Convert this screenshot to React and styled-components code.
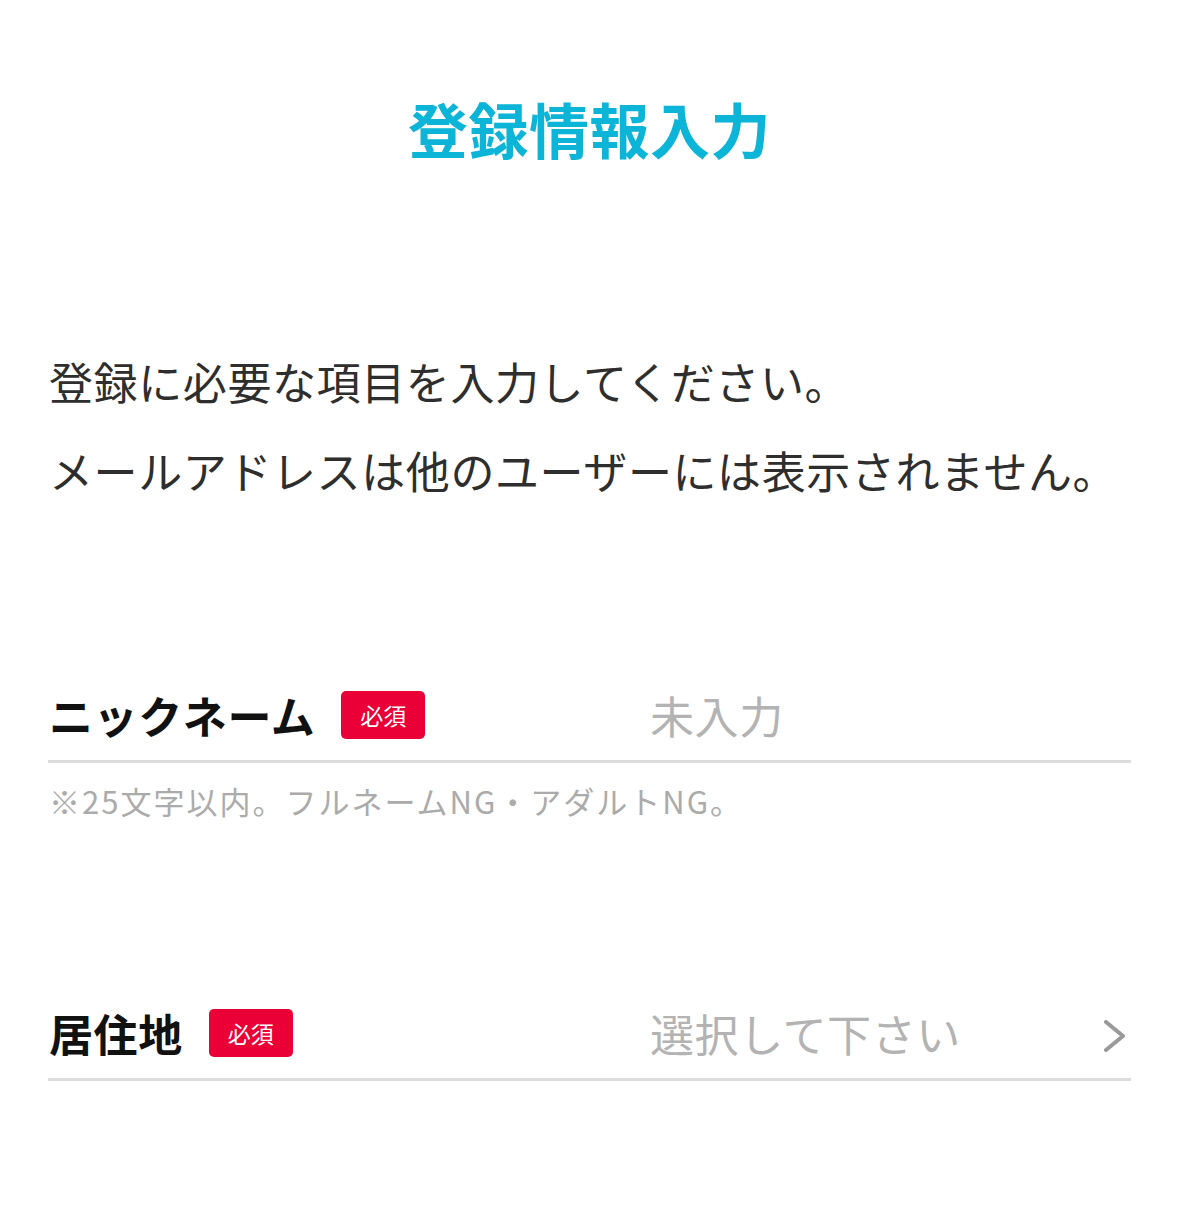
import React from "react";
import styled, { createGlobalStyle } from "styled-components";

const GlobalStyle = createGlobalStyle`
  html, body {
    margin: 0;
    padding: 0;
    background: #fff;
  }
  body {
    font-family: "Noto Sans CJK JP", "Noto Sans", sans-serif;
  }
`;

const Page = styled.div`
  width: 1179px;
  min-height: 1228px;
  box-sizing: border-box;
  padding: 98px 48px 0;
  background: #fff;
`;

const Title = styled.h1`
  margin: 0;
  font-size: 60px;
  line-height: 60px;
  font-weight: 700;
  letter-spacing: 0.5px;
  color: #0cb5d7;
  text-align: center;
`;

const Intro = styled.div`
  margin-top: 179px;
  padding-left: 1px;
  font-size: 44px;
  line-height: 89px;
  letter-spacing: 0.6px;
  color: #2e2e2e;
`;

const Field = styled.div`
  margin-top: ${(p) => p.$gap}px;
`;

// one form row: label + badge, then the value column, then optional chevron
const Row = styled.div`
  display: flex;
  align-items: center;
  height: 60px;
  padding-bottom: 15px;
  border-bottom: 3px solid #dcdcdc;
`;

const LabelArea = styled.div`
  display: flex;
  align-items: center;
  width: 602px;
  flex-shrink: 0;
  padding-left: 1px;
  box-sizing: border-box;
`;

const Label = styled.span`
  font-size: 44px;
  font-weight: 700;
  color: #111;
  line-height: 1;
  letter-spacing: 0.6px;
`;

const Badge = styled.span`
  display: inline-flex;
  align-items: center;
  justify-content: center;
  margin-left: 26px;
  width: 84px;
  height: 48px;
  border-radius: 5px;
  background: #ea0036;
  color: #fff;
  font-size: 23px;
  line-height: 1;
`;

const Value = styled.span`
  flex: 1;
  font-size: 44px;
  color: #b3b3b3;
  line-height: 1;
  letter-spacing: 0.6px;
`;

const Chevron = styled.svg`
  width: 22px;
  height: 32px;
  margin-right: 5px;
  margin-top: 6px;
`;

const Hint = styled.p`
  margin: 18px 0 0;
  padding-left: 1px;
  font-size: 31px;
  line-height: 40px;
  letter-spacing: 2px;
  color: #ababab;
`;

const App = () => (
  <>
    <GlobalStyle />
    <Page>
      <Title>登録情報入力</Title>
      <Intro>
        <div>登録に必要な項目を入力してください。</div>
        <div>メールアドレスは他のユーザーには表示されません。</div>
      </Intro>

      <Field $gap={170}>
        <Row>
          <LabelArea>
            <Label>ニックネーム</Label>
            <Badge>必須</Badge>
          </LabelArea>
          <Value>未入力</Value>
        </Row>
        <Hint>※25文字以内。フルネームNG・アダルトNG。</Hint>
      </Field>

      <Field $gap={182}>
        <Row>
          <LabelArea>
            <Label>居住地</Label>
            <Badge>必須</Badge>
          </LabelArea>
          <Value>選択して下さい</Value>
          <Chevron viewBox="0 0 22 32" fill="none">
            <polyline points="2,2 19,16 2,30" stroke="#9a9a9a" strokeWidth="4" strokeLinecap="round" strokeLinejoin="round" />
          </Chevron>
        </Row>
      </Field>
    </Page>
  </>
);

export default App;
